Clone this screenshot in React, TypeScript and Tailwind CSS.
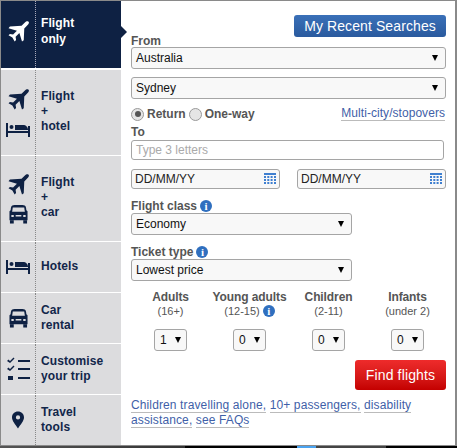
const navy = "#0e2143";

function Plane({ color = navy }: { color?: string }) {
  return (
    <svg width="21" height="21" viewBox="0 0 24 24" fill={color}>
      <path d="M23.500.800c-1.200-1-3-.3-4.200.9l-3.800 3.800L2.200 6.200.6 8.200l9.600 3-4.400 4.300-3.600-.7L.6 16.400l4.400 2.500 2.600 4.400 1.600-1.600-.5-3.600 4.300-4.400 3 9.800 2-1.600.6-13.400 3.800-3.800c1.200-1.200 2.100-3 1.100-3.900z" />
    </svg>
  );
}

function Bed() {
  return (
    <svg width="24" height="14" viewBox="0 0 24 14" fill={navy}>
      <rect x="0" y="0" width="2" height="14" />
      <rect x="22" y="3" width="2" height="11" />
      <rect x="0" y="8" width="24" height="2" />
      <circle cx="5.500" cy="4" r="2" />
      <path d="M9 2h8c3 0 5 2 5 5H9z" />
    </svg>
  );
}

function Car() {
  return (
    <svg width="19" height="19" viewBox="0 0 20 20" fill={navy}>
      <path d="M3.500 0.500C5 0 15 0 16.500 0.500 17.500 1 18 2 18.300 5.500L19.500 6.500 19.500 16 0.500 16 0.500 6.500 1.700 5.500C2 2 2.500 1 3.500 0.500zM4 2.500 3.300 7 16.700 7 16 2.500zM2.500 10.500 2.500 12.500 5 12.500 5 10.500zM15 10.500 15 12.500 17.500 12.500 17.500 10.500zM7 10.500 7 12 13 12 13 10.500z" fillRule="evenodd" />
      <rect x="1" y="16" width="4" height="3.500" />
      <rect x="15" y="16" width="4" height="3.500" />
    </svg>
  );
}

function Checklist() {
  return (
    <svg width="23" height="24" viewBox="0 0 23 24" fill={navy}>
      <path d="M0 4 1.500 2.500 3 4 6.500 0.500 7.500 1.500 3 6z" />
      <rect x="11" y="3" width="12" height="2" />
      <path d="M0 12 1.500 10.500 3 12 6.500 8.500 7.500 9.500 3 14z" />
      <rect x="11" y="11" width="12" height="2" />
      <rect x="1" y="19" width="5" height="4" />
      <rect x="11" y="20" width="12" height="2" />
    </svg>
  );
}

function Pin() {
  return (
    <svg width="12" height="18" viewBox="0 0 14 20" fill={navy}>
      <path fillRule="evenodd" d="M7 0C3 0 0 3 0 7c0 4 4 8 7 13 3-5 7-9 7-13 0-4-3-7-7-7zM7 4.500A2.500 2.500 0 1 1 7 9.500 2.500 2.500 0 0 1 7 4.500z" />
    </svg>
  );
}

function Info() {
  return (
    <span className="inline-flex h-[12px] w-[12px] items-center justify-center rounded-full bg-[#2f6fbf] font-['Liberation_Serif',serif] text-[11px] font-bold leading-none text-white">
      i
    </span>
  );
}

function CalendarIcon() {
  return (
    <svg width="12" height="12" viewBox="0 0 12 12" fill="#3f7fd0">
      <rect x="0" y="0" width="12" height="2" />
      <path d="M0 3h2v2H0zM3.300 3h2v2h-2zM6.600 3h2v2h-2zM10 3h2v2h-2zM0 6h2v2H0zM3.300 6h2v2h-2zM6.600 6h2v2h-2zM10 6h2v2h-2zM0 9h2v2H0zM3.300 9h2v2h-2zM6.600 9h2v2h-2zM10 9h2v2h-2z" />
    </svg>
  );
}

function Arrow() {
  return <span className="h-0 w-0 border-x-[3.500px] border-t-[6px] border-x-transparent border-t-black" />;
}

function FakeSelect({ value, className }: { value: string; className: string }) {
  return (
    <div className={`flex h-[22px] items-center justify-between rounded-[3px] border border-[#a5a5a5] bg-[#f8f8f8] pl-[4px] pr-[7px] text-[12px] text-[#111] ${className}`}>
      <span>{value}</span>
      <Arrow />
    </div>
  );
}

function DateBox() {
  return (
    <div className="flex h-[20px] w-[149px] items-center justify-between rounded-[3px] border border-[#a5a5a5] bg-[#f8f8f8] pl-[3px] pr-[3px] text-[12px] text-[#222]">
      <span>DD/MM/YY</span>
      <CalendarIcon />
    </div>
  );
}

const tabs = [
  { h: "h-[85px]", gap: "gap-[13px]", pb: "pb-[2px]", icons: [<Plane key="p" />, <Bed key="b" />], lines: ["Flight", "+", "hotel"] },
  { h: "h-[85px]", gap: "gap-[10px]", pb: "pb-[2px]", icons: [<Plane key="p" />, <Car key="c" />], lines: ["Flight", "+", "car"] },
  { h: "h-[50px]", gap: "gap-0", pb: "pb-[1px]", icons: [<Bed key="b" />], lines: ["Hotels"] },
  { h: "h-[50px]", gap: "gap-0", pb: "pb-0", icons: [<Car key="c" />], lines: ["Car", "rental"] },
  { h: "h-[50px]", gap: "gap-0", pb: "pb-0", icons: [<Checklist key="l" />], lines: ["Customise", "your trip"] },
  { h: "h-[50px]", gap: "gap-0", pb: "pb-0", icons: [<Pin key="t" />], lines: ["Travel", "tools"] },
];

const pax = [
  { name: "Adults", sub: "(16+)", value: "1", info: false },
  { name: "Young adults", sub: "(12-15)", value: "0", info: true },
  { name: "Children", sub: "(2-11)", value: "0", info: false },
  { name: "Infants", sub: "(under 2)", value: "0", info: false },
];

export default function App() {
  return (
    <div className="flex h-[448px] w-[457px] flex-col font-['Liberation_Sans',Arial,sans-serif]">
      <div className="flex h-[446px] border-y border-l border-r-2 border-[#8a8a8a] bg-white">
        {/* left tabs */}
        <div className="flex w-[120px] flex-col gap-px">
          <div className="relative mb-px flex h-[67px] bg-[#0e2143] text-white">
            <div className="flex w-[35px] items-center justify-center border-r border-dotted border-[#aab] pb-[6px]">
              <Plane color="#fff" />
            </div>
            <div className="pl-[5px] pt-[14px] text-[12px] font-bold leading-[16px] tracking-[0.1px]">
              Flight<br />only
            </div>
            <span className="absolute left-[120px] top-[25px] h-0 w-0 border-y-[6px] border-l-[6px] border-y-transparent border-l-[#0e2143]" />
          </div>
          {tabs.map((t) => (
            <div key={t.lines.join()} className={`flex bg-[#dcdcde] ${t.h}`}>
              <div className={`flex w-[35px] flex-col items-center justify-center border-r border-dotted border-[#888] ${t.gap}`}>
                {t.icons}
              </div>
              <div className={`flex flex-col justify-center pl-[5px] text-[12px] font-bold leading-[15px] tracking-[0.1px] text-[#12264a] ${t.pb}`}>
                {t.lines.map((l) => (
                  <div key={l}>{l}</div>
                ))}
              </div>
            </div>
          ))}
        </div>
        {/* form */}
        <div className="flex w-[334px] flex-col pl-[10px] pr-[8px] text-[#555]">
          <div className="flex justify-end pr-[1px] pt-[14px]">
            <div className="flex h-[22px] w-[152px] items-center justify-center rounded-[3px] bg-gradient-to-b from-[#3a70b8] to-[#2a5a9e] text-[14px] tracking-[0.1px] text-white">
              My Recent Searches
            </div>
          </div>
          <div className="-mt-px text-[12px] font-bold leading-[11px]">From</div>
          <FakeSelect value="Australia" className="w-[315px]" />
          <FakeSelect value="Sydney" className="mt-[8px] w-[315px]" />
          <div className="mt-[6px] flex h-[18px] w-[314px] items-center text-[12px] font-bold">
            <span className="mr-[2px] flex h-[13px] w-[13px] items-center justify-center rounded-full border border-[#999] bg-[#e5e5e5]">
              <span className="h-[6px] w-[6px] rounded-full bg-[#555]" />
            </span>
            <span className="ml-[1px]">Return</span>
            <span className="ml-[3px] mr-[3px] h-[13px] w-[13px] rounded-full border border-[#999] bg-[#e5e5e5]" />
            <span>One-way</span>
            <span className="ml-auto border-b border-[#bbb] text-[12px] font-normal leading-[13px] tracking-[0.05px] text-[#3f5fa8]">Multi-city/stopovers</span>
          </div>
          <div className="mt-[3px] text-[12px] font-bold leading-[13px]">To</div>
          <div className="mt-[1px] flex h-[20px] w-[313px] items-center rounded-[3px] border border-[#a5a5a5] pl-[4px] text-[12px] text-[#aaa]">
            Type 3 letters
          </div>
          <div className="mt-[9px] flex w-[315px] justify-between">
            <DateBox />
            <DateBox />
          </div>
          <div className="mt-[10px] flex h-[14px] items-center gap-[3px] text-[12px] font-bold">
            Flight class <Info />
          </div>
          <FakeSelect value="Economy" className="w-[221px]" />
          <div className="mt-[10px] flex h-[14px] items-center gap-[3px] text-[12px] font-bold">
            Ticket type <Info />
          </div>
          <FakeSelect value="Lowest price" className="w-[221px]" />
          <div className="mt-[9px] flex">
            {pax.map((p) => (
              <div key={p.name} className="flex w-[79px] flex-col items-center">
                <div className="whitespace-nowrap text-[12px] font-bold leading-[14px] tracking-[-0.1px]">{p.name}</div>
                <div className="flex items-center gap-[3px] text-[11px] leading-[14px]">
                  {p.sub}
                  {p.info && <Info />}
                </div>
                <div className="mt-[11px] flex h-[22px] w-[33px] items-center justify-between rounded-[3px] border border-[#a5a5a5] bg-[#f8f8f8] pl-[5px] pr-[5px] text-[12px] text-[#111]">
                  {p.value}
                  <Arrow />
                </div>
              </div>
            ))}
          </div>
          <div className="mt-[9px] flex w-[315px] justify-end">
            <div className="flex h-[30px] w-[91px] items-center justify-center rounded-[3px] bg-gradient-to-b from-[#ee2b2b] to-[#c40000] text-[14px] tracking-[0.15px] text-white">
              Find flights
            </div>
          </div>
          <div className="mt-[8px] text-[12px] leading-[15px] tracking-[0.12px] text-[#3f5fa8]">
            <span className="border-b border-[#bbb]">Children travelling alone,</span>{" "}
            <span className="border-b border-[#bbb]">10+ passengers,</span>{" "}
            <span className="border-b border-[#bbb]">disability</span>
            <br />
            <span className="border-b border-[#bbb]">assistance,</span>{" "}
            <span className="border-b border-[#bbb]">see FAQs</span>
          </div>
        </div>
      </div>
      {/* window behind the widget */}
      <div className="flex h-[2px]">
        <div className="w-[185px] bg-gradient-to-r from-[#555] to-[#333]" />
        <div className="w-[112px] bg-black" />
        <div className="w-[19px] bg-[#4aa3f0]" />
        <div className="w-[70px] bg-[#444]" />
        <div className="flex-1 bg-black" />
      </div>
    </div>
  );
}
